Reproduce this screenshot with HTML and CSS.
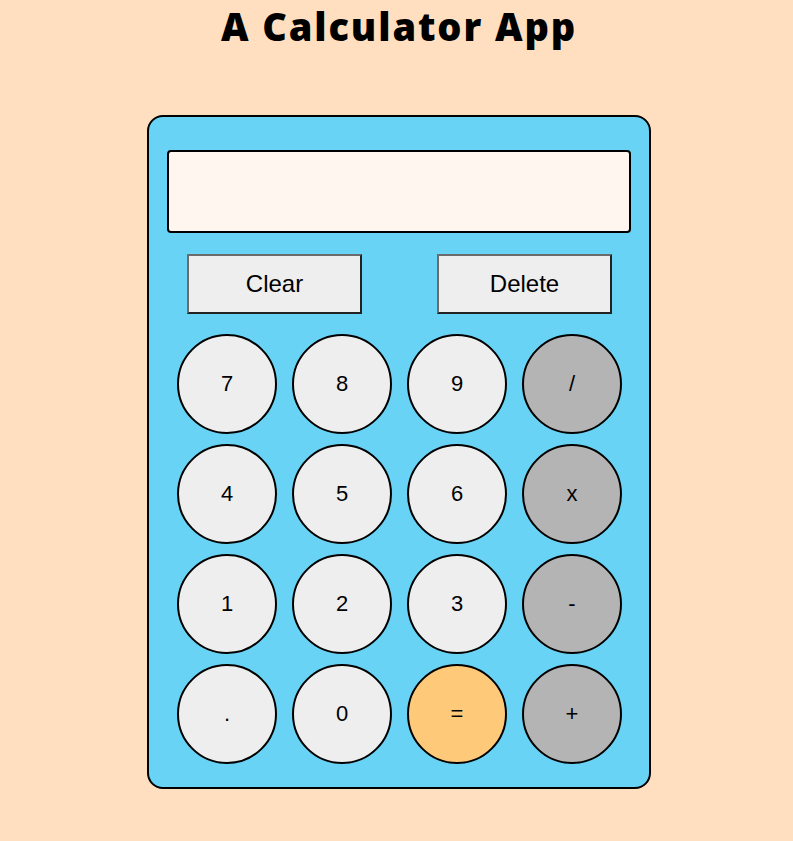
FILE: index.html
```html
<!DOCTYPE html>
<html>
<head>
<meta charset="utf-8">
<link rel="stylesheet" href="styles.css">
</head>
<body>
<h1 class="title">A Calculator App</h1>
<div class="calc">
  <div class="display"></div>
  <div class="actions">
    <button class="act">Clear</button>
    <button class="act">Delete</button>
  </div>
  <div class="keys">
    <button class="key">7</button>
    <button class="key">8</button>
    <button class="key">9</button>
    <button class="key op">/</button>
    <button class="key">4</button>
    <button class="key">5</button>
    <button class="key">6</button>
    <button class="key op">x</button>
    <button class="key">1</button>
    <button class="key">2</button>
    <button class="key">3</button>
    <button class="key op">-</button>
    <button class="key">.</button>
    <button class="key">0</button>
    <button class="key eq">=</button>
    <button class="key op">+</button>
  </div>
</div>
</body>
</html>
```
FILE: styles.css
```css
html, body {
  margin: 0;
  background: #ffdfbf;
}
body {
  padding: 0 0 0 5px;
  font-family: "Liberation Sans", Arial, sans-serif;
}
.title {
  margin: 0;
  padding-top: 4px;
  height: 115px;
  box-sizing: border-box;
  text-align: center;
  font-family: "Open Sans", sans-serif;
  font-weight: 800;
  font-size: 38px;
  letter-spacing: 1.9px;
  line-height: 44px;
  color: #000;
}
.calc {
  width: 464px;
  margin: 0 auto;
  padding: 33px 18px 23px;
  background: #68d3f5;
  border: 2px solid #000;
  border-radius: 16px;
}
.display {
  height: 79px;
  background: #fff6f0;
  border: 2px solid #000;
  border-radius: 4px;
}
.actions {
  display: flex;
  justify-content: space-between;
  padding: 0 19px 0 20px;
  margin-top: 21px;
}
.act {
  width: 175px;
  height: 60px;
  background: #eeeeee;
  border: 2px solid;
  border-color: #6b6b6b #222 #222 #6b6b6b;
  font-family: "Liberation Sans", Arial, sans-serif;
  font-size: 24px;
  color: #000;
  padding: 0;
}
.keys {
  display: grid;
  grid-template-columns: repeat(4, 100px);
  grid-auto-rows: 100px;
  column-gap: 15px;
  row-gap: 10px;
  margin: 20px 0 0 10px;
}
.key {
  width: 100px;
  height: 100px;
  border-radius: 50%;
  border: 2px solid #000;
  background: #eeeeee;
  font-family: "Liberation Sans", Arial, sans-serif;
  font-size: 22px;
  color: #000;
  padding: 0;
}
.key.op {
  background: #b4b4b4;
}
.key.eq {
  background: #ffc97a;
}
```
